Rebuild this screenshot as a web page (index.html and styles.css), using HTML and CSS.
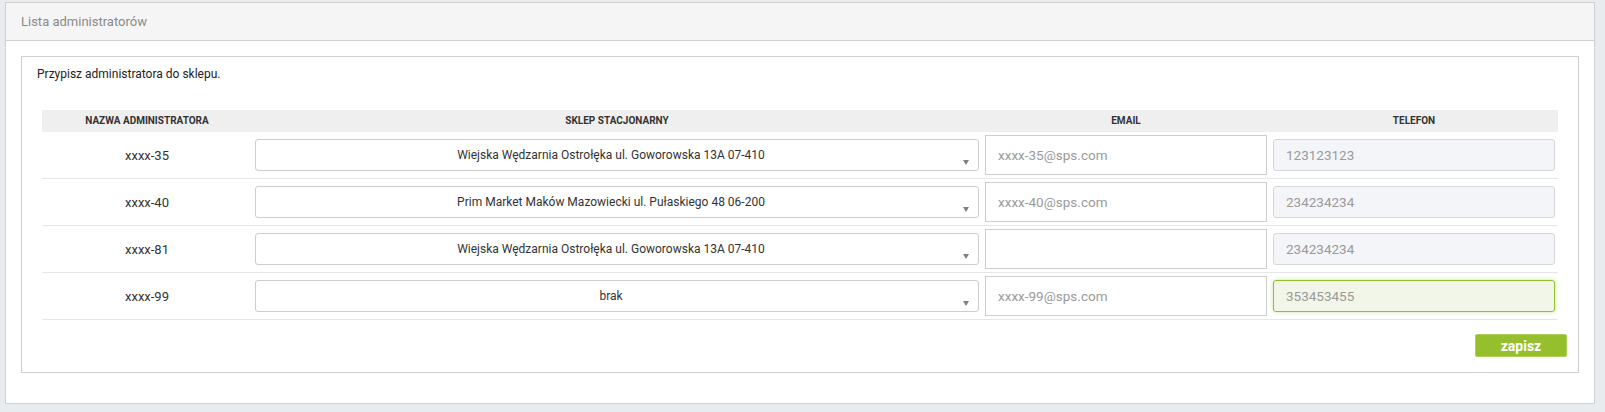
FILE: index.html
```html
<!DOCTYPE html>
<html lang="pl">
<head>
    <meta charset="UTF-8">
    <meta name="viewport" content="width=device-width, initial-scale=1.0">
    <title>Lista administratorów</title>
    <link rel="stylesheet" href="styles.css">
</head>
<body>
    <div class="panel">
        <div class="panel-heading">Lista administratorów</div>
        <div class="panel-body">
            <div class="box">
                <p class="intro">Przypisz administratora do sklepu.</p>

                <table class="admins">
                    <colgroup>
                        <col class="col-name">
                        <col class="col-shop">
                        <col class="col-mail">
                        <col class="col-phone">
                    </colgroup>
                    <thead>
                        <tr>
                            <th>Nazwa administratora</th>
                            <th>Sklep stacjonarny</th>
                            <th>Email</th>
                            <th>Telefon</th>
                        </tr>
                    </thead>
                    <tbody>
                        <tr>
                            <td class="name">xxxx-35</td>
                            <td><div class="select">Wiejska Wędzarnia Ostrołęka ul. Goworowska 13A 07-410</div></td>
                            <td><input type="text" class="input-mail" placeholder="xxxx-35@sps.com"></td>
                            <td><input type="text" class="input-phone" value="123123123"></td>
                        </tr>
                        <tr>
                            <td class="name">xxxx-40</td>
                            <td><div class="select">Prim Market Maków Mazowiecki ul. Pułaskiego 48 06-200</div></td>
                            <td><input type="text" class="input-mail" placeholder="xxxx-40@sps.com"></td>
                            <td><input type="text" class="input-phone" value="234234234"></td>
                        </tr>
                        <tr>
                            <td class="name">xxxx-81</td>
                            <td><div class="select">Wiejska Wędzarnia Ostrołęka ul. Goworowska 13A 07-410</div></td>
                            <td><input type="text" class="input-mail"></td>
                            <td><input type="text" class="input-phone" value="234234234"></td>
                        </tr>
                        <tr>
                            <td class="name">xxxx-99</td>
                            <td><div class="select">brak</div></td>
                            <td><input type="text" class="input-mail" placeholder="xxxx-99@sps.com"></td>
                            <td><input type="text" class="input-phone is-focused" value="353453455"></td>
                        </tr>
                    </tbody>
                </table>

                <div class="actions">
                    <button type="button" class="btn-save">zapisz</button>
                </div>
            </div>
        </div>
    </div>
</body>
</html>
```

FILE: styles.css
```css
body {
    margin: 0;
    padding: 2px 10px 0 5px;
    background-color: #e9ecef;
    font-family: Roboto, "Liberation Sans", Arial, sans-serif;
    color: #222;
}

.panel {
    background-color: #fff;
    border: 1px solid #cfcfcf;
}

.panel-heading {
    height: 37px;
    line-height: 37px;
    padding: 0 15px;
    background-color: #f5f5f5;
    border-bottom: 1px solid #cfcfcf;
    font-size: 13px;
    color: #8a8a8a;
}

.panel-body {
    padding: 15px 15px 30px;
}

.box {
    border: 1px solid #cfcfcf;
    padding: 8px 15px 15px;
}

.intro {
    margin: 0;
    font-size: 12px;
    line-height: 18px;
    color: #222;
}

/* table */
.admins {
    width: calc(100% - 10px);
    margin: 27px 5px 0;
    border-collapse: collapse;
    table-layout: fixed;
}
.col-name { width: 210px; }
.col-shop { width: 730px; }
.col-mail { width: 288px; }
.col-phone { width: 288px; }

.admins th {
    background-color: #efefef;
    padding: 3px;
    height: 16px;
    font-size: 10px;
    line-height: 16px;
    font-weight: bold;
    text-transform: uppercase;
    color: #333;
    text-align: center;
}

.admins td {
    padding: 3px;
    border-bottom: 1px solid #e6e6e6;
    vertical-align: middle;
}

.admins td.name {
    text-align: center;
    font-size: 13px;
    color: #333;
}

/* fake select */
.select {
    position: relative;
    box-sizing: border-box;
    height: 32px;
    line-height: 30px;
    padding: 0 24px 0 12px;
    border: 1px solid #cdcdcd;
    border-radius: 3px;
    background-color: #fff;
    font-size: 12px;
    color: #333;
    text-align: center;
    white-space: nowrap;
}
.select::after {
    content: "";
    position: absolute;
    right: 9px;
    top: 20px;
    border-left: 3.5px solid transparent;
    border-right: 3.5px solid transparent;
    border-top: 5px solid #808080;
}

input {
    display: block;
    width: 100%;
    box-sizing: border-box;
    margin: 0;
    padding: 0 12px;
    font-family: Roboto, "Liberation Sans", Arial, sans-serif;
    font-size: 13.5px;
    color: #9a9a9a;
    outline: none;
}
input::placeholder {
    color: #9a9a9a;
}

.input-mail {
    height: 40px;
    border: 1px solid #cdcdcd;
    border-radius: 0;
    background-color: #fff;
}

.input-phone {
    height: 32px;
    border: 1px solid #d3d6da;
    border-radius: 3px;
    background-color: #f4f5f9;
}

.input-phone.is-focused {
    border-color: #8dc22b;
    background-color: #f2f6e8;
    box-shadow: 0 0 4px rgba(141, 194, 43, 0.45);
}

/* save button */
.actions {
    display: flex;
    justify-content: flex-end;
    margin: 14px -4px 0 0;
}

.btn-save {
    width: 92px;
    height: 23px;
    padding: 0;
    background-color: #96bf2d;
    border: 1px solid #add058;
    border-radius: 2px;
    font-family: Roboto, "Liberation Sans", Arial, sans-serif;
    font-size: 14px;
    font-weight: bold;
    color: #fff;
    cursor: pointer;
}
```
